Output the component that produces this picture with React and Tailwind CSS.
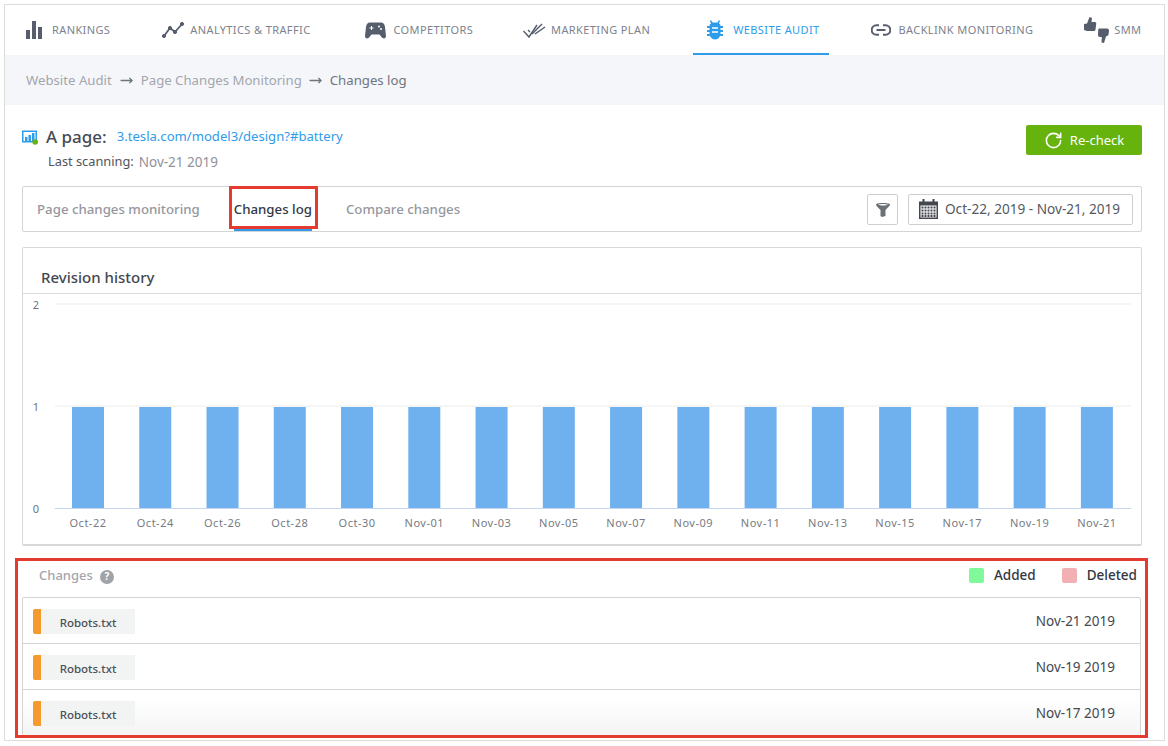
import { RotateCw, MoveRight } from 'lucide-react';

const font = { fontFamily: '"Noto Sans", "Open Sans", sans-serif' };

const labels = ['Oct-22', 'Oct-24', 'Oct-26', 'Oct-28', 'Oct-30', 'Nov-01', 'Nov-03', 'Nov-05', 'Nov-07', 'Nov-09', 'Nov-11', 'Nov-13', 'Nov-15', 'Nov-17', 'Nov-19', 'Nov-21'];
const rows = ['Nov-21 2019', 'Nov-19 2019', 'Nov-17 2019'];

function BarsIcon() {
  return (
    <svg width="17" height="18" viewBox="0 0 17 18" fill="#565e6d">
      <rect x="0" y="9" width="4" height="9" />
      <rect x="6" y="0" width="4" height="18" />
      <rect x="12" y="6" width="4" height="12" />
    </svg>
  );
}

function TrendIcon() {
  return (
    <svg width="22" height="16" viewBox="0 0 22 16" fill="#565e6d" stroke="#565e6d">
      <path d="M2 14 L8 6 L13 10 L20 2" fill="none" strokeWidth="1.8" />
      <circle cx="2" cy="14" r="1.6" />
      <circle cx="8" cy="6" r="1.6" />
      <circle cx="13" cy="10" r="1.6" />
      <circle cx="20" cy="2" r="1.6" />
    </svg>
  );
}

function PadIcon() {
  return (
    <svg width="21" height="17" viewBox="0 0 21 17">
      <path d="M5 0.5 H16 C18.5 0.5 19.5 2 20 5 L21 14 C21 16.5 18.5 17.5 16.5 15 L14.5 12.5 H6.5 L4.5 15 C2.5 17.5 0 16.5 0 14 L1 5 C1.5 2 2.5 0.5 5 0.5 Z" fill="#565e6d" />
      <path d="M4.5 6 H8.5 M6.5 4 V8" stroke="#fff" strokeWidth="1" />
      <circle cx="14" cy="4.5" r="1" fill="#fff" />
      <circle cx="16" cy="7" r="1" fill="#fff" />
    </svg>
  );
}

function ChecksIcon() {
  return (
    <svg width="23" height="15" viewBox="0 0 23 15" fill="none" stroke="#565e6d" strokeWidth="1.5">
      <path d="M0.5 8 L6 14 L14 2" />
      <path d="M5 7 L7 9" />
      <path d="M9 11 L19 1" />
      <path d="M12 11 L22 4" />
    </svg>
  );
}

function BugIcon() {
  return (
    <svg width="16" height="20" viewBox="0 0 16 20" fill="#2f9ceb">
      <path d="M4 0 L5.5 2.5 H10.5 L12 0 L13 1 L12 3.5 C13 4 13.5 5 13.5 6 H16 V8 H13.5 V10 H16 V12 H13.5 V14 H16 V16 H13 C12 18.5 10 19.5 8 19.5 C6 19.5 4 18.5 3 16 H0 V14 H2.5 V12 H0 V10 H2.5 V8 H0 V6 H2.5 C2.5 5 3 4 4 3.5 L3 1 Z" />
      <path d="M5 8 H11 M5 12 H11" stroke="#fff" strokeWidth="1.4" />
    </svg>
  );
}

function ChainIcon() {
  return (
    <svg width="20" height="12" viewBox="0 0 20 12" fill="none" stroke="#565e6d" strokeWidth="2">
      <path d="M8 1.2 H5.5 A4.8 4.8 0 0 0 5.5 10.8 H8" />
      <path d="M12 1.2 H14.5 A4.8 4.8 0 0 1 14.5 10.8 H12" />
      <path d="M5.5 6 H14.5" />
    </svg>
  );
}

function ThumbsIcon() {
  return (
    <svg width="25" height="26" viewBox="0 0 25 26" fill="#565e6d">
      <path d="M5.5 0 L8 1 L7.5 5 L11 5 C12 5 12.5 6 12.2 7 L11.5 12.5 C11.3 13.5 10.5 14 9.5 14 H3 L0 13 V7 L3 6.5 Z" />
      <path d="M15.5 11.5 H23 C24.5 11.5 25 12.5 25 13.5 L24.6 17 C24.4 18.5 23.5 19 22 19.5 L20 26 L17.5 25.5 L17.8 20 H16 C14.5 20 14 19 14 18 L14.2 13 C14.2 12 14.7 11.5 15.5 11.5 Z" />
    </svg>
  );
}

function PageIcon() {
  return (
    <svg width="16" height="15" viewBox="0 0 16 15">
      <rect x="0" y="0.5" width="15" height="12" fill="#2f9ceb" />
      <rect x="1.5" y="2" width="12" height="9" fill="#fff" />
      <rect x="3" y="7" width="2.5" height="4" fill="#2f9ceb" />
      <rect x="6.5" y="5" width="2.5" height="6" fill="#2f9ceb" />
      <rect x="10" y="3" width="2.5" height="8" fill="#2f9ceb" />
      <circle cx="13.2" cy="12" r="2.8" fill="#66b30e" />
    </svg>
  );
}

function FunnelIcon() {
  return (
    <svg width="14" height="15" viewBox="0 0 14 15" fill="#6b6f76">
      <path d="M0 2.5 C0 0.5 14 0.5 14 2.5 C14 3.5 13 4.5 9.5 8 V14 L6 15 L4.5 14 V8 C1 4.5 0 3.5 0 2.5 Z" />
      <path d="M2 2.8 C4 1.8 10 1.8 12 2.8 C10 3.8 4 3.8 2 2.8 Z" fill="#fff" />
    </svg>
  );
}

function CalendarIcon() {
  return (
    <svg width="19" height="20" viewBox="0 0 19 20" fill="#44474d">
      <rect x="0" y="2.5" width="19" height="17.5" />
      <rect x="3.5" y="0" width="2" height="4.5" />
      <rect x="13.5" y="0" width="2" height="4.5" />
      <rect x="1.5" y="6.5" width="16" height="12" fill="#fff" />
      {[7.5, 10.5, 13.5, 16].map(y => [2.5, 5.5, 8.5, 11.5, 14.5].map(x => (
        <rect key={`${x}-${y}`} x={x} y={y} width="2" height="2" />
      )))}
    </svg>
  );
}

function NavItem({ icon, label, gap = 'gap-[7px]', active, className = '' }) {
  return (
    <div className={`flex items-center h-[49px] pt-[2px] border-b-2 ${gap} ${className} ${active ? 'border-[#2f9ceb] text-[#2f9ceb] pl-[14px] pr-[9px]' : 'border-transparent text-[#7d828c]'}`}>
      {icon}
      <span className="text-[11px] tracking-[0.39px] uppercase">{label}</span>
    </div>
  );
}

function Chart() {
  return (
    <svg width="1118" height="251" viewBox="23 294 1118 251" style={font}>
      {[304, 406].map(y => <line key={y} x1="55" x2="1131" y1={y} y2={y} stroke="#ececec" />)}
      <line x1="55" x2="1131" y1="508.5" y2="508.5" stroke="#c4d7ef" />
      <text x="36" y="309" textAnchor="middle" fontSize="11" fill="#6f747c">2</text>
      <text x="36" y="411" textAnchor="middle" fontSize="11" fill="#6f747c">1</text>
      <text x="36" y="513" textAnchor="middle" fontSize="11" fill="#6f747c">0</text>
      {labels.map((label, i) => {
        const x = 72 + i * 67.26;
        return (
          <g key={label}>
            <rect x={x} y="407" width="32" height="101" fill="#6fb1ee" />
            <text x={x + 16} y="527" textAnchor="middle" fontSize="11" letterSpacing="0.5" fill="#767b83">{label}</text>
          </g>
        );
      })}
    </svg>
  );
}

export default function App() {
  return (
    <div className="w-[1168px] h-[746px] bg-white pl-[4px] pr-[3px] pt-[4px] pb-[5px] overflow-hidden" style={font}>
      <div className="h-full border border-[#dcdcdc] bg-white overflow-hidden">
        <nav className="flex items-center gap-[52px] pl-[21px] h-[50px]">
          <NavItem icon={<BarsIcon />} label="Rankings" gap="gap-[9px]" />
          <NavItem icon={<TrendIcon />} label="Analytics & Traffic" gap="gap-[6px]" />
          <NavItem icon={<PadIcon />} label="Competitors" className="ml-[3px]" />
          <NavItem icon={<ChecksIcon />} label="Marketing Plan" gap="gap-[5px]" className="ml-[-2px]" />
          <NavItem icon={<BugIcon />} label="Website Audit" gap="gap-[10px]" active className="ml-[-9px] mr-[-9px]" />
          <NavItem icon={<ChainIcon />} label="Backlink Monitoring" gap="gap-[8px]" className="ml-[-1px]" />
          <NavItem icon={<ThumbsIcon />} label="SMM" gap="gap-[5px]" className="ml-[-1px]" />
        </nav>

        <div className="flex items-center h-[50px] pl-[21px] pt-[1px] bg-[#f5f6fa] text-[13.2px] text-[#a3a6ad]">
          <span>Website Audit</span>
          <MoveRight className="mx-[8px] text-[#6f747c]" size={13} strokeWidth={2.4} />
          <span>Page Changes Monitoring</span>
          <MoveRight className="ml-[7px] mr-[8px] text-[#6f747c]" size={13} strokeWidth={2.4} />
          <span className="text-[#70747c]">Changes log</span>
        </div>

        <div className="flex justify-between pl-[17px] pr-[22px] pt-[20px]">
          <div>
            <div className="flex items-center h-[24px]">
              <span className="mr-[8px]">
                <PageIcon />
              </span>
              <span className="text-[17px] font-medium text-[#474b53] mr-[10px]">A page:</span>
              <span className="text-[13.1px] text-[#2f9ceb]">3.tesla.com/model3/design?#battery</span>
            </div>
            <div className="flex items-center h-[20px] pl-[26px] mt-[3px]">
              <span className="text-[12.8px] text-[#50545c] mr-[5px]">Last scanning:</span>
              <span className="text-[13.5px] text-[#8f929a]">Nov-21 2019</span>
            </div>
          </div>
          <button className="flex items-center justify-center gap-[7px] w-[116px] h-[30px] pt-[1px] rounded-[2px] bg-[#66b30e] text-white text-[13px]">
            <RotateCw size={19} />
            Re-check
          </button>
        </div>

        <div className="flex items-center justify-between h-[46px] ml-[17px] mr-[22px] mt-[14px] border border-[#d4d4d4] rounded-[2px]">
          <div className="flex items-center h-full pl-[14px] text-[13.25px] font-medium text-[#94979e]">
            <span className="pt-[1px]">Page changes monitoring</span>
            <span className="relative flex items-center h-full ml-[34px] pt-[1px] text-[#33373f]">
              Changes log
              <span className="absolute left-0 right-0 bottom-0 h-[2px] bg-[#2f9ceb]" />
              <span className="absolute left-[-5px] right-[-6px] top-[-1px] h-[43px] border-[3px] border-[#e53a2f]" />
            </span>
            <span className="ml-[34px] pt-[1px]">Compare changes</span>
          </div>
          <div className="flex items-center gap-[10px] pr-[8px]">
            <span className="flex items-center justify-center w-[31px] h-[31px] border border-[#cfcfcf] rounded-[2px]">
              <FunnelIcon />
            </span>
            <span className="flex items-center gap-[7px] w-[225px] h-[31px] pl-[10px] border border-[#cfcfcf] rounded-[2px] text-[13.6px] text-[#55595f]">
              <CalendarIcon />
              Oct-22, 2019 - Nov-21, 2019
            </span>
          </div>
        </div>

        <div className="ml-[17px] mr-[22px] mt-[15px] h-[299px] border border-[#d8d8d8] border-b-2 rounded-[2px]">
          <div className="h-[46px] pl-[18px] pt-[18px] border-b border-[#dcdcdc] text-[15px] leading-[22px] font-medium text-[#44484f]">
            Revision history
          </div>
          <Chart />
        </div>

        <section className="ml-[10px] mr-[16px] mt-[12px] h-[180px] border-[3px] border-[#e53a2f] overflow-hidden">
          <div className="flex items-center justify-between h-[36px] pb-[7px] pl-[21px] pr-[8px]">
            <div className="flex items-center gap-[7px] text-[13px] font-medium text-[#a3a6ad]">
              Changes
              <span className="flex items-center justify-center w-[14px] h-[14px] mt-[2px] rounded-full bg-[#a0a3a8] text-white text-[10px] font-bold">?</span>
            </div>
            <div className="flex items-center text-[13.5px] font-medium text-[#33373f]">
              <span className="w-[15px] h-[15px] rounded-[2px] bg-[#80f99b] mr-[10px]" />
              Added
              <span className="w-[15px] h-[15px] rounded-[2px] bg-[#f3b0b4] ml-[26px] mr-[10px]" />
              Deleted
            </div>
          </div>
          <div className="mx-[4px] border border-[#d4d4d4] rounded-[2px]">
            {rows.map((date, i) => (
              <div key={date} className={`flex items-center justify-between pt-[2px] pl-[10px] pr-[25px] ${i === 0 ? 'h-[45px]' : 'h-[46px] border-t border-[#d4d4d4]'} ${i === 2 ? 'bg-gradient-to-b from-white from-[20%] to-[#f4f4f4]' : ''}`}>
                <div className="flex items-center h-[25px] w-[102px] bg-[#f2f3f3] rounded-l-[2px]">
                  <span className="w-[8px] h-full bg-[#f49a2f] rounded-l-[2px]" />
                  <span className="flex-1 pt-[3px] text-center text-[11.5px] font-medium text-[#4b4f56]">Robots.txt</span>
                </div>
                <span className="text-[13.5px] text-[#44484f]">{date}</span>
              </div>
            ))}
          </div>
        </section>
      </div>
    </div>
  );
}
